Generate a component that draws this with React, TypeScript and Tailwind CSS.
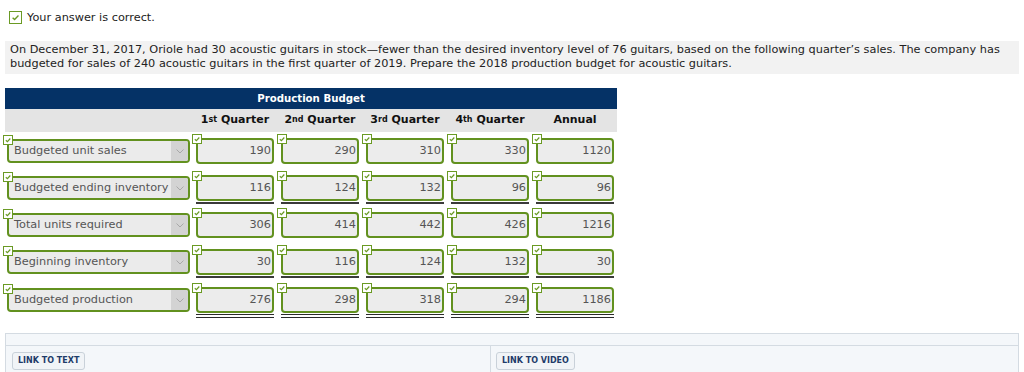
import React from 'react'

const rows = [
  { label: 'Budgeted unit sales', vals: [190, 290, 310, 330, 1120], line: 'none' },
  { label: 'Budgeted ending inventory', vals: [116, 124, 132, 96, 96], line: 'single' },
  { label: 'Total units required', vals: [306, 414, 442, 426, 1216], line: 'none' },
  { label: 'Beginning inventory', vals: [30, 116, 124, 132, 30], line: 'single' },
  { label: 'Budgeted production', vals: [276, 298, 318, 294, 1186], line: 'double' },
]

function Tick({ size = 10 }: { size?: number }) {
  return (
    <svg width={size} height={size} viewBox="0 0 10 10" className="block">
      <rect x="0.5" y="0.5" width="9" height="9" fill="#fff" stroke="#6a9a24" />
      <path d="M2.8 5.2 L4.4 6.6 L7.3 3.5" fill="none" stroke="#6a9a24" strokeWidth="1.2" />
    </svg>
  )
}

function Chevron() {
  return (
    <svg width="8" height="5" viewBox="0 0 8 5">
      <path d="M0.5 0.5 L4 4 L7.5 0.5" fill="none" stroke="#a8a8a8" strokeWidth="1" />
    </svg>
  )
}

function Head({ n, sup }: { n: string; sup: string }) {
  return (
    <div className="w-[78px] text-center whitespace-nowrap">
      {n}
      <sup className="text-[8px] relative -top-[1px]">{sup}</sup> Quarter
    </div>
  )
}

export default function App() {
  return (
    <div className="w-[1024px] h-[372px] overflow-hidden bg-white text-[11.3px] text-[#333] font-['DejaVu_Sans',sans-serif]">
      <div className="flex items-center gap-[5px] pt-[10px] pl-[9px]">
        <div className="w-[13px] h-[13px] border border-[#6a9a24] bg-white grid place-items-center">
          <svg width="9" height="9" viewBox="0 0 10 10">
            <path d="M1.8 5.2 L4 7.3 L8.3 2.8" fill="none" stroke="#6a9a24" strokeWidth="1.5" />
          </svg>
        </div>
        <span className="text-[#222] leading-[13px] pt-[1px]">Your answer is correct.</span>
      </div>

      <div className="mt-[17px] mx-[5px] bg-[#f2f2f2] px-[5px] pt-[2px] pb-[3px] leading-[14px] text-[#222]">
        <div className="whitespace-nowrap">
          On December 31, 2017, Oriole had 30 acoustic guitars in stock—fewer than the desired inventory level of 76 guitars, based on the following quarter’s sales. The company has
        </div>
        <div className="whitespace-nowrap">
          budgeted for sales of 240 acoustic guitars in the first quarter of 2019. Prepare the 2018 production budget for acoustic guitars.
        </div>
      </div>

      <div className="mt-[14px] ml-[5px] w-[612px]">
        <div className="h-[21px] bg-[#053266] text-white font-bold text-[10.2px] flex items-center justify-center">
          Production Budget
        </div>
        <div className="h-[23px] bg-[#e4e4e4] flex items-center font-bold text-[11px] text-[#111]">
          <div className="w-[191px]" />
          <div className="flex gap-[7px]">
            <Head n="1" sup="st" />
            <Head n="2" sup="nd" />
            <Head n="3" sup="rd" />
            <Head n="4" sup="th" />
            <div className="w-[78px] text-center">Annual</div>
          </div>
        </div>

        {rows.map((r, i) => (
          <div key={r.label} className={`h-[37px] flex items-start pt-[6px] ${i === 4 ? 'mt-[1px]' : ''}`}>
            <div className="relative ml-[2px] mt-[1px] w-[183px] h-[24px] rounded-[4px] border-2 border-[#62911f] bg-[#ebebeb] flex items-stretch text-[#555]">
              <div className="flex-1 flex items-center pl-[5px] whitespace-nowrap overflow-hidden">{r.label}</div>
              <div className="w-[17px] bg-[#d3d3d3] rounded-r-[2px] grid place-items-center">
                <Chevron />
              </div>
              <div className="absolute -left-[6px] -top-[6px]">
                <Tick />
              </div>
            </div>
            <div className="ml-[6px] flex gap-[7px]">
              {r.vals.map((v, j) => (
                <div key={j} className="w-[78px]">
                  <div className="relative h-[26px] rounded-[4px] border-2 border-[#62911f] bg-[#ececec] flex items-center justify-end pr-[1px] text-[#555]">
                    {v}
                    <div className="absolute -left-[6px] -top-[6px]">
                      <Tick />
                    </div>
                  </div>
                  {r.line === 'single' && <div className="mt-[1px] h-[2px] bg-[#3a3a3a]" />}
                  {r.line === 'double' && <div className="mt-[1px] h-[4px] border-y border-[#2a2a2a]" />}
                </div>
              ))}
            </div>
          </div>
        ))}
      </div>

      <div className="mt-[15px] mx-[5px] border border-[#d4dbe2] bg-[#f4f7fa] h-[60px]">
        <div className="h-[12px] border-b border-[#d4dbe2]" />
        <div className="flex h-full">
          <div className="w-[485px] border-r border-[#d4dbe2] pl-[6px] pt-[6px]">
            <button className="h-[18px] px-[5px] rounded-[3px] border border-[#c9d1d9] bg-[#f1f4f7] text-[8px] font-bold text-[#1e3b69]">
              LINK TO TEXT
            </button>
          </div>
          <div className="pl-[5px] pt-[6px]">
            <button className="h-[18px] px-[5px] rounded-[3px] border border-[#c9d1d9] bg-[#f1f4f7] text-[8px] font-bold text-[#1e3b69]">
              LINK TO VIDEO
            </button>
          </div>
        </div>
      </div>
    </div>
  )
}
